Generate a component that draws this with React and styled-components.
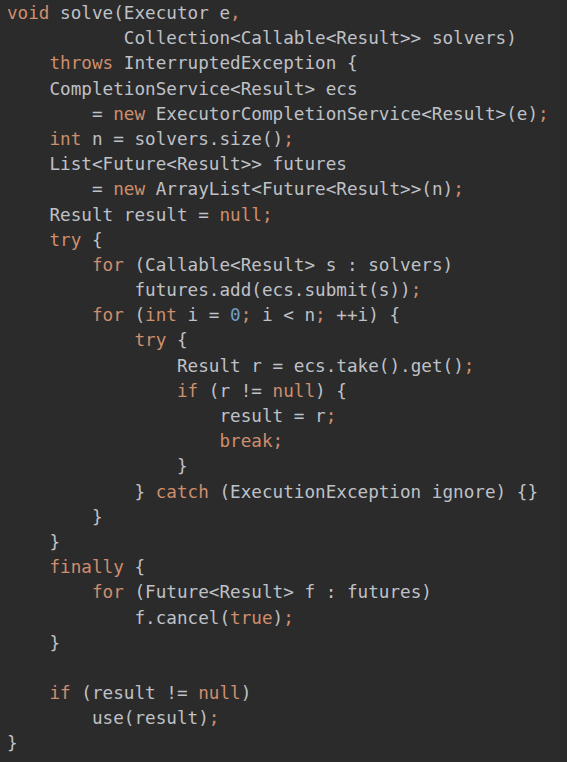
import React from 'react';
import styled, { createGlobalStyle } from 'styled-components';

const GlobalStyle = createGlobalStyle`
  html,
  body {
    margin: 0;
    padding: 0;
    background: #2b2b2b;
  }
`;

const Editor = styled.pre`
  margin: 0;
  padding: 1px 0 0 7px;
  min-height: 762px;
  box-sizing: border-box;

  background: #2b2b2b;
  color: #bcbec4;

  font-family: 'DejaVu Sans Mono', 'Liberation Mono', monospace;
  font-size: 17.65px;
  line-height: 25.2px;
  letter-spacing: 0;
`;

const Line = styled.div`
  height: 25.2px;
  white-space: pre;
`;

const colors = {
  keyword: '#cf8e6d',
  punct: '#cf8e6d',
  number: '#6f9fc8',
  plain: '#bfc1c7',
};

const Token = styled.span`
  color: ${props => colors[props.kind]};
`;

const code = `void solve(Executor e,
           Collection<Callable<Result>> solvers)
    throws InterruptedException {
    CompletionService<Result> ecs
        = new ExecutorCompletionService<Result>(e);
    int n = solvers.size();
    List<Future<Result>> futures
        = new ArrayList<Future<Result>>(n);
    Result result = null;
    try {
        for (Callable<Result> s : solvers)
            futures.add(ecs.submit(s));
        for (int i = 0; i < n; ++i) {
            try {
                Result r = ecs.take().get();
                if (r != null) {
                    result = r;
                    break;
                }
            } catch (ExecutionException ignore) {}
        }
    }
    finally {
        for (Future<Result> f : futures)
            f.cancel(true);
    }

    if (result != null)
        use(result);
}`;

const keywords = new Set([
  'void',
  'throws',
  'new',
  'int',
  'null',
  'try',
  'for',
  'if',
  'break',
  'catch',
  'finally',
  'true',
]);

// split a line into keyword / punctuation / number / plain runs
const tokenize = line =>
  line.split(/(\w+|[;,])/).filter(Boolean).map(part => {
    if (keywords.has(part)) return { kind: 'keyword', text: part };
    if (part === ';' || part === ',') return { kind: 'punct', text: part };
    if (/^\d+$/.test(part)) return { kind: 'number', text: part };
    return { kind: 'plain', text: part };
  });

const App = () => (
  <>
    <GlobalStyle />
    <Editor>
      {code.split('\n').map((line, i) => (
        <Line key={i}>
          {tokenize(line).map((t, j) => (
            <Token key={j} kind={t.kind}>
              {t.text}
            </Token>
          ))}
        </Line>
      ))}
    </Editor>
  </>
);

export default App;
